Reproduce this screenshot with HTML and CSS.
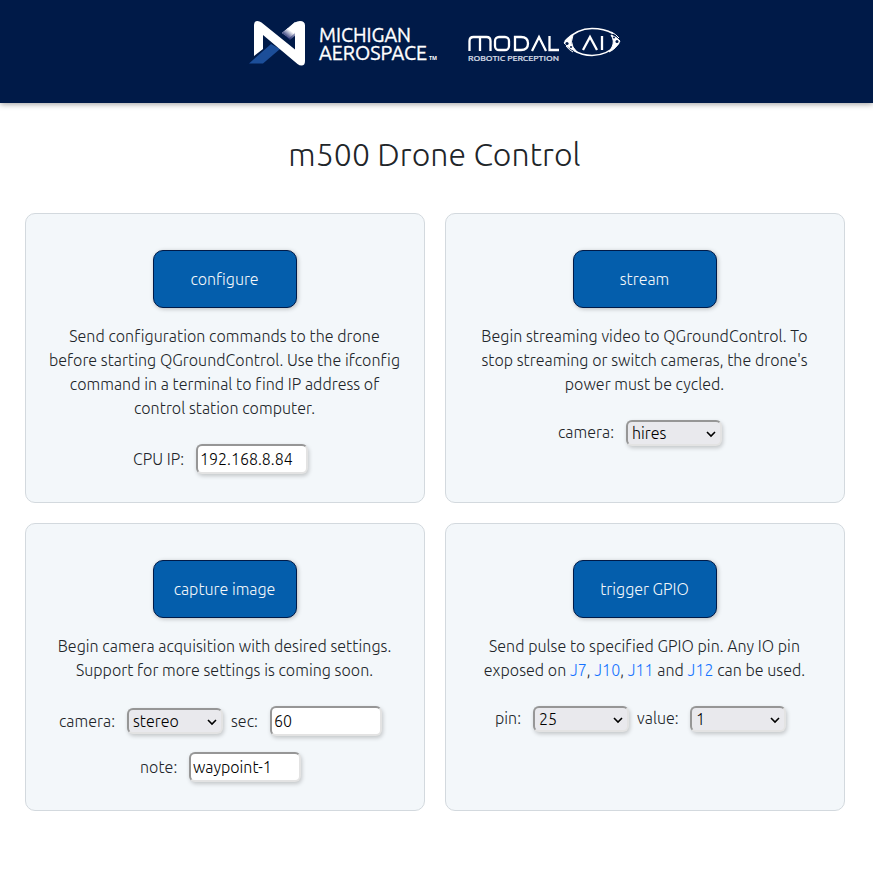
FILE: index.html
```html
<!DOCTYPE html>
<html lang="en">
<head>
<meta charset="utf-8">
<title>m500 Drone Control</title>
<link rel="stylesheet" href="styles.css">
</head>
<body>
<header class="header">
  <svg class="logo-michigan" width="190" height="50" viewBox="0 0 190 50" role="img" aria-label="Michigan Aerospace">
    <defs>
      <linearGradient id="fold" x1="0" y1="1" x2="1" y2="0">
        <stop offset=".2" stop-color="#283374"/><stop offset=".7" stop-color="#fff"/>
      </linearGradient>
    </defs>
    <path d="M1 45.500 23 26l9 5-17 14.500z" fill="#1c4e99"/>
    <path d="M34 15 47 4l8 7-13 11z" fill="url(#fold)"/>
    <path fill-rule="evenodd" d="M6 38V7Q6 3 9.500 3q2 0 4 1.500L47 31.500V14.500L41 19.500 34 15 47 4.500Q49 3 52 3q5 0 5 4.500V43q0 4.500-3.500 4.500-2 0-4-1.500L15 17v14z" fill="#fff"/>
    <path d="M34 15 40 10l7 5-6 5z" fill="url(#fold)"/>
    <text class="brand" x="71" y="24" textLength="92" lengthAdjust="spacingAndGlyphs">MICHIGAN</text>
    <text class="brand" x="71" y="42" textLength="108" lengthAdjust="spacingAndGlyphs">AEROSPACE</text>
    <text class="trademark" x="181" y="42" textLength="8" lengthAdjust="spacingAndGlyphs">TM</text>
  </svg>
  <svg class="logo-modal" width="154" height="40" viewBox="0 0 154 40" role="img" aria-label="ModalAI Robotic Perception">
    <g fill="none" stroke="#fff" stroke-width="2.300">
      <path d="M1.500 27V17q0-4 4-4h13q4 0 4 4v10M12 13v14"/>
      <rect x="27" y="13" width="14" height="13" rx="4"/>
      <path d="M47 13h6q7 0 7 6.500T53 26h-6zM64 27l7-14 7 14M81.500 12v14H91"/>
      <path d="M115 26l7-13 7 13M134 12v14"/>
    </g>
    <g fill="none" stroke="#fff" stroke-width="1.500">
      <path d="M97 17Q109 4.500 124 4.500q12 0 21 5M151 19q-12 12.500-27 12.500-10 0-18-5"/>
      <path d="M143 8q5 2 8 6M98 22q3 4 7 6" stroke-width="1"/>
      <path d="M96 19q2-5 9-8-3 7 0 12l4 5q-8-3-13-9zM152 17q-3-4-9-6 4 6 1 12l-3 5q7-3 11-11z" fill="#fff" stroke-width="1"/>
    </g>
    <circle cx="99" cy="19.500" r="1.600" fill="#001a48"/><circle cx="103" cy="23" r="1" fill="#001a48"/><circle cx="149" cy="17.500" r="1.500" fill="#001a48"/><circle cx="146" cy="13.500" r="1" fill="#001a48"/>
    <text class="tagline" x="0" y="36.500" textLength="91" lengthAdjust="spacingAndGlyphs">ROBOTIC PERCEPTION</text>
  </svg>
</header>
<main class="page">
  <h1 class="title">m500 Drone Control</h1>
  <div class="grid">
    <section class="card">
      <button class="action">configure</button>
      <p class="text">Send configuration commands to the drone<br>before starting QGroundControl. Use the ifconfig<br>command in a terminal to find IP address of<br>control station computer.</p>
      <div class="row ip-row"><label for="ip">CPU IP:</label><input id="ip" value="192.168.8.84"></div>
    </section>
    <section class="card">
      <button class="action">stream</button>
      <p class="text">Begin streaming video to QGroundControl. To<br>stop streaming or switch cameras, the drone's<br>power must be cycled.</p>
      <div class="row stream-row"><label for="cam">camera:</label><select id="cam"><option>hires</option></select></div>
    </section>
    <section class="card">
      <button class="action">capture image</button>
      <p class="text">Begin camera acquisition with desired settings.<br>Support for more settings is coming soon.</p>
      <div class="row capture-row"><label for="cam2">camera:</label><select id="cam2"><option>stereo</option></select><label class="second" for="sec">sec:</label><input id="sec" value="60"></div>
      <div class="row note-row"><label for="note">note:</label><input id="note" value="waypoint-1"></div>
    </section>
    <section class="card">
      <button class="action">trigger GPIO</button>
      <p class="text">Send pulse to specified GPIO pin. Any IO pin<br>exposed on <a href="#">J7</a>, <a href="#">J10</a>, <a href="#">J11</a> and <a href="#">J12</a> can be used.</p>
      <div class="row gpio-row"><label for="pin">pin:</label><select id="pin"><option>25</option></select><label class="second" for="value">value:</label><select id="value"><option>1</option></select></div>
    </section>
  </div>
</main>
</body>
</html>
```
FILE: styles.css
```css
* { box-sizing: border-box; }
body {
  margin: 0;
  background: #fff;
  color: #212529;
  font: 300 16px/24px Ubuntu, "Open Sans", "Noto Sans", sans-serif;
}
.header {
  display: flex;
  gap: 30px;
  height: 103px;
  padding: 18px 0 0 248px;
  background: #001a48;
  box-shadow: 0 1px 6px rgba(0, 0, 0, .4);
}
.logo-modal { margin-top: 6px; }
.brand { font: 400 20px Ubuntu, "Noto Sans", sans-serif; fill: #fff; stroke: #fff; stroke-width: .35px; }
.trademark { font: 700 5px "Noto Sans", sans-serif; fill: #fff; }
.tagline { font: 500 6.5px Ubuntu, "Noto Sans", sans-serif; fill: #d5dbe5; stroke: #d5dbe5; stroke-width: .2px; }
.page { width: 820px; margin-left: 25px; }
.title {
  margin: 32px 0 39px;
  padding-right: 1px;
  font-size: 32px;
  line-height: 39px;
  font-weight: 300;
  letter-spacing: .05px;
  text-align: center;
}
.grid {
  display: grid;
  grid-template-columns: 400px 400px;
  grid-template-rows: 290px 288px;
  gap: 20px;
}
.card {
  display: flex;
  flex-direction: column;
  align-items: center;
  padding-top: 36px;
  border: 1px solid #d3d9de;
  border-radius: 10px;
  background: #f3f7fa;
}
.action {
  width: 144px;
  height: 58px;
  padding: 0 1px 0 0;
  border: 1px solid #001a48;
  border-radius: 10px;
  background: #045eac;
  box-shadow: 1px 1px 4px rgba(0, 0, 0, .25);
  color: #f3f7fa;
  font: inherit;
}
.text { margin: 16px 0 24px; padding-right: 1px; text-align: center; white-space: nowrap; letter-spacing: .04px; }
a { color: #1573ff; text-decoration: none; }
.row { display: flex; align-items: center; align-self: flex-start; white-space: nowrap; }
label { flex: none; letter-spacing: .04px; }
input, select {
  flex: none;
  margin: 0;
  border: 2px solid;
  border-color: #969696 #e3e3e3 #e3e3e3 #969696;
  border-radius: 6px;
  box-shadow: 1px 2px 4px rgba(0, 0, 0, .2);
  color: #000;
  font: inherit;
}
input { width: 112px; height: 30px; padding: 0 2px; background: #fff; }
select {
  width: 96px;
  height: 26px;
  padding: 0 18px 2px 4px;
  appearance: none;
  background: #e9e9ed url("data:image/svg+xml,%3Csvg xmlns='http://www.w3.org/2000/svg' width='10' height='7'%3E%3Cpath d='M1 1l4 4 4-4' fill='none' stroke='%23000' stroke-width='1.600'/%3E%3C/svg%3E") no-repeat right 4px top 9px;
  line-height: 22px;
}
.ip-row { margin-left: 107px; }
.ip-row label { width: 63px; }
.stream-row { margin-left: 112px; }
.stream-row label { width: 68px; }
.stream-row label, .gpio-row label { margin-top: -2px; }
.stream-row select, .gpio-row select { padding-bottom: 3px; }
.capture-row { margin-left: 33px; }
.capture-row label { width: 68px; }
.capture-row .second { width: 39px; margin-left: 8px; }
.note-row { margin: 16px 0 0 114px; }
.note-row label { width: 49px; }
.gpio-row { margin-left: 49px; }
.gpio-row label { width: 38px; }
.gpio-row .second { width: 53px; margin-left: 8px; }
```
